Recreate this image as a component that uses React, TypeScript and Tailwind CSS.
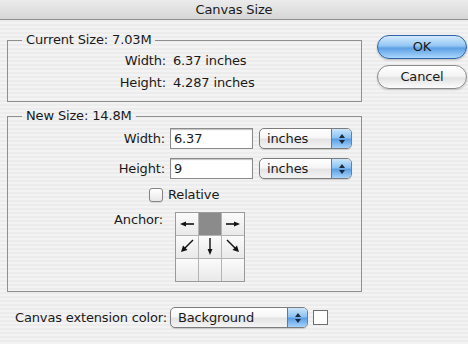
const font = "font-['DejaVu_Sans',sans-serif] tracking-[-0.15px]"

function Select({ value, width }: { value: string; width: string }) {
  return (
    <div className={`${width} h-[21px] flex rounded-[5px] border border-[#7c7c7c] overflow-hidden bg-[linear-gradient(#ffffff_0%,#f6f6f6_45%,#e4e4e4_55%,#f4f4f4_100%)] shadow-[0_1px_1px_rgba(0,0,0,0.15)]`}>
      <span className="flex-1 pl-[7px] text-[13px] leading-[19px] text-[#1a1a1a]">{value}</span>
      <span className="w-[20px] flex items-center justify-center border-l border-[#4a7dbd] bg-[linear-gradient(#cbe5fb_0%,#8cc3f2_45%,#5c9fe4_55%,#a6d3fb_100%)]">
        <svg width="8" height="12" viewBox="0 0 8 12">
          <polygon points="4,1 7,5 1,5" fill="#1d2a3a" />
          <polygon points="4,11 7,7 1,7" fill="#1d2a3a" />
        </svg>
      </span>
    </div>
  )
}

function Arrow({ dir }: { dir: string }) {
  const c = '#111'
  return (
    <svg width="22" height="22" viewBox="0 0 22 22">
      {dir === 'w' && (
        <>
          <line x1="18" y1="11" x2="9" y2="11" stroke={c} strokeWidth="1.6" />
          <polygon points="4,11 10,8.5 10,13.5" fill={c} />
        </>
      )}
      {dir === 'e' && (
        <>
          <line x1="4" y1="11" x2="13" y2="11" stroke={c} strokeWidth="1.6" />
          <polygon points="18,11 12,8.5 12,13.5" fill={c} />
        </>
      )}
      {dir === 's' && (
        <>
          <line x1="11" y1="2" x2="11" y2="14" stroke={c} strokeWidth="1.4" />
          <polygon points="11,19 8.6,13 13.4,13" fill={c} />
        </>
      )}
      {dir === 'sw' && (
        <>
          <line x1="17" y1="4" x2="9" y2="12" stroke={c} strokeWidth="1.4" />
          <polygon points="5,16 7,9.5 11.5,14" fill={c} />
        </>
      )}
      {dir === 'se' && (
        <>
          <line x1="5" y1="4" x2="13" y2="12" stroke={c} strokeWidth="1.4" />
          <polygon points="17,16 15,9.5 10.5,14" fill={c} />
        </>
      )}
    </svg>
  )
}

const cells = ['w', 'active', 'e', 'sw', 's', 'se', '', '', '']

export default function App() {
  return (
    <div className={`${font} w-[468px] h-[344px] overflow-hidden text-[13px] text-[#1a1a1a] bg-[repeating-linear-gradient(180deg,#ececec_0px,#ececec_2px,#f3f3f3_2px,#f3f3f3_4px)]`}>
      {/* Title bar */}
      <div className="h-[20px] border-b border-[#8e8e8e] bg-[linear-gradient(#ececec,#d6d6d6)] text-center leading-[19px]">
        Canvas Size
      </div>

      <div className="flex">
        {/* Left column */}
        <div className="w-[362px] pl-[7px]">
          <fieldset className="mt-[12px] h-[70px] border border-[#8f8f8f] pb-[6px]">
            <legend className="ml-[14px] px-[4px] leading-[16px]">Current Size: 7.03M</legend>
            <div className="mt-[2px] flex h-[22px] items-center">
              <span className="w-[158px] text-right">Width:</span>
              <span className="pl-[7px]">6.37 inches</span>
            </div>
            <div className="flex h-[22px] items-center">
              <span className="w-[158px] text-right">Height:</span>
              <span className="pl-[7px]">4.287 inches</span>
            </div>
          </fieldset>

          <fieldset className="mt-[6px] h-[184px] border border-[#8f8f8f]">
            <legend className="ml-[14px] px-[4px] leading-[16px]">New Size: 14.8M</legend>
            <div className="mt-[4px] flex items-center">
              <span className="w-[157px] text-right">Width:</span>
              <input readOnly value="6.37" className={`${font} ml-[5px] h-[21px] w-[83px] border border-[#8b8b8b] bg-white pl-[3px] text-[13px] shadow-[inset_0_1px_1px_rgba(0,0,0,0.25)] outline-none`} />
              <div className="ml-[6px]"><Select value="inches" width="w-[93px]" /></div>
            </div>
            <div className="mt-[9px] flex items-center">
              <span className="w-[157px] text-right">Height:</span>
              <input readOnly value="9" className={`${font} ml-[5px] h-[21px] w-[83px] border border-[#8b8b8b] bg-white pl-[3px] text-[13px] shadow-[inset_0_1px_1px_rgba(0,0,0,0.25)] outline-none`} />
              <div className="ml-[6px]"><Select value="inches" width="w-[93px]" /></div>
            </div>
            <div className="mt-[9px] flex items-center pl-[141px]">
              <span className="h-[14px] w-[14px] rounded-[3px] border border-[#858585] bg-[linear-gradient(#ffffff,#e8e8e8)] shadow-[0_1px_1px_rgba(0,0,0,0.12)]" />
              <span className="ml-[5px] leading-[14px]">Relative</span>
            </div>
            <div className="mt-[10px] flex items-start">
              <span className="w-[155px] text-right leading-[16px]">Anchor:</span>
              <div className="ml-[12px] grid grid-cols-[repeat(3,22px)] gap-px border border-[#9a9a9a] bg-[#b4b4b4]">
                {cells.map((c, i) => (
                  <div
                    key={i}
                    className={
                      c === 'active'
                        ? 'h-[22px] w-[22px] bg-[#8b8b8b]'
                        : 'flex h-[22px] w-[22px] items-center justify-center bg-[linear-gradient(#fbfbfb,#e9e9e9)]'
                    }
                  >
                    {c && c !== 'active' && <Arrow dir={c} />}
                  </div>
                ))}
              </div>
            </div>
          </fieldset>
        </div>

        {/* Buttons */}
        <div className="ml-[15px] mt-[15px] flex flex-col gap-[6px]">
          <button className="h-[24px] w-[90px] rounded-full border border-[#2f62a6] bg-[linear-gradient(#d4eafd_0%,#92c6f3_45%,#5d9fe3_55%,#a9d7fd_100%)] text-[13px] leading-[22px] shadow-[0_1px_2px_rgba(0,0,0,0.25)]">
            OK
          </button>
          <button className="h-[24px] w-[90px] rounded-full border border-[#8a8a8a] bg-[linear-gradient(#ffffff_0%,#f4f4f4_45%,#e2e2e2_55%,#fdfdfd_100%)] text-[13px] leading-[22px] shadow-[0_1px_2px_rgba(0,0,0,0.2)]">
            Cancel
          </button>
        </div>
      </div>

      {/* Bottom row */}
      <div className="mt-[15px] flex items-center pl-[15px]">
        <span className="w-[150px] whitespace-nowrap">Canvas extension color:</span>
        <div className="ml-[5px]"><Select value="Background" width="w-[138px]" /></div>
        <span className="ml-[5px] h-[15px] w-[15px] border border-[#707070] bg-white" />
      </div>
    </div>
  )
}
